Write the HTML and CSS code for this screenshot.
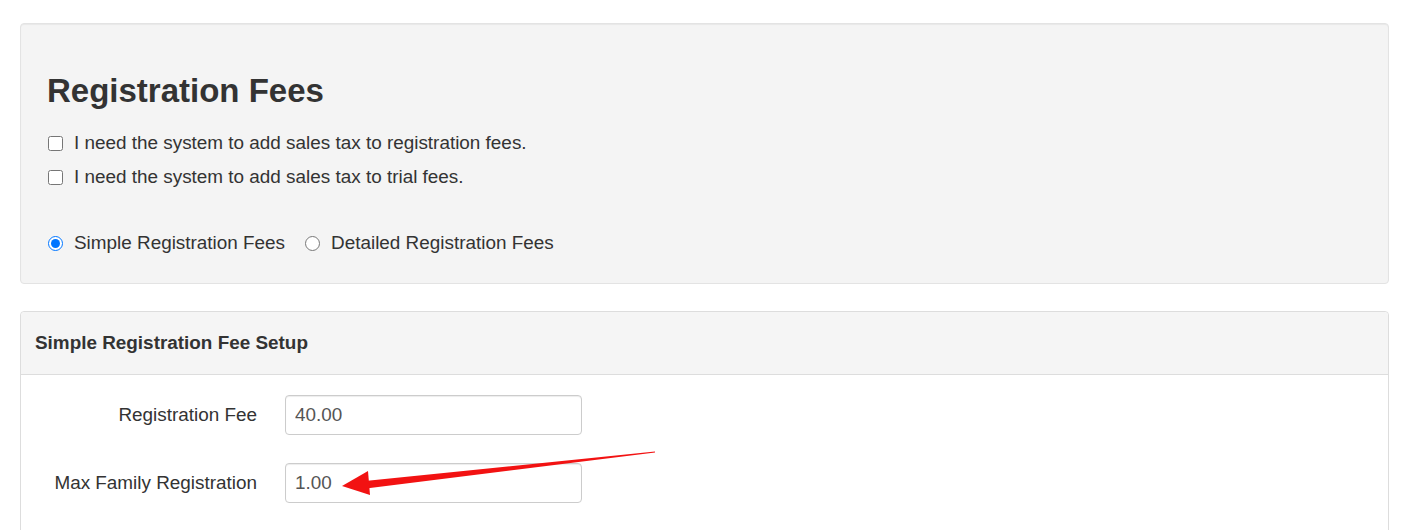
FILE: index.html
```html
<!DOCTYPE html>
<html>
<head>
<meta charset="utf-8">
<link rel="stylesheet" href="styles.css">
</head>
<body>
<div class="page">
  <section class="well">
    <h1 class="title">Registration Fees</h1>
    <label class="check"><input type="checkbox"> I need the system to add sales tax to registration fees.</label>
    <label class="check"><input type="checkbox"> I need the system to add sales tax to trial fees.</label>
    <div class="radios">
      <label class="radio"><input type="radio" name="mode" checked> Simple Registration Fees</label>
      <label class="radio"><input type="radio" name="mode"> Detailed Registration Fees</label>
    </div>
  </section>
  <section class="panel">
    <div class="panel-heading">Simple Registration Fee Setup</div>
    <div class="panel-body">
      <div class="row">
        <label class="row-label">Registration Fee</label>
        <input class="field" type="text" value="40.00">
      </div>
      <div class="row">
        <label class="row-label">Max Family Registration</label>
        <input class="field" type="text" value="1.00">
      </div>
      <div class="row">
        <label class="row-label"></label>
        <input class="field" type="text" value="">
      </div>
    </div>
  </section>
  <svg class="arrow" width="1402" height="530" viewBox="0 0 1402 530">
    <polygon points="655,451.5 655,452.5 366,488.5 365,481" fill="#f21212"/>
    <polygon points="342,486 368,471 370,495" fill="#f21212"/>
  </svg>
</div>
</body>
</html>
```

FILE: styles.css
```css
html, body {
  margin: 0;
  padding: 0;
  background: #ffffff;
}
body {
  font-family: "Liberation Sans", Arial, Helvetica, sans-serif;
  font-size: 18.9px;
  color: #333333;
}
.page {
  position: relative;
  padding: 23px 13px 0 20px;
  height: 507px;
  overflow: hidden;
}
.well {
  background: #f4f4f4;
  border: 1px solid #e3e3e3;
  border-radius: 4px;
  box-shadow: inset 0 1px 1px rgba(0, 0, 0, 0.05);
  padding: 21px 26px 23px 26px;
}
.title {
  font-size: 33px;
  font-weight: bold;
  line-height: 35px;
  margin: 28px 0 18px 0;
  color: #333333;
}
.check {
  display: flex;
  align-items: center;
  height: 34px;
  gap: 11px;
}
.check input,
.radio input {
  width: 15px;
  height: 15px;
  margin: 0 0 0 1px;
}
.radios {
  display: flex;
  align-items: center;
  height: 34px;
  margin-top: 32px;
  gap: 19px;
}
.radio {
  display: flex;
  align-items: center;
  gap: 11px;
}
.panel {
  margin-top: 27px;
  border: 1px solid #dddddd;
  border-radius: 4px;
  background: #ffffff;
  height: 300px;
}
.panel-heading {
  background: #f5f5f5;
  border-bottom: 1px solid #dddddd;
  border-radius: 4px 4px 0 0;
  height: 62px;
  display: flex;
  align-items: center;
  padding: 0 14px;
  font-weight: bold;
  font-size: 18.9px;
  color: #333333;
}
.panel-body {
  padding: 20px 0 0 0;
  display: flex;
  flex-direction: column;
  gap: 28px;
}
.row {
  display: grid;
  grid-template-columns: 236px 297px;
  column-gap: 28px;
  align-items: center;
}
.row-label {
  text-align: right;
  color: #333333;
}
.field {
  box-sizing: border-box;
  height: 40px;
  width: 297px;
  border: 1px solid #cccccc;
  border-radius: 4px;
  padding: 0 9px;
  font-family: "Liberation Sans", Arial, sans-serif;
  font-size: 18.9px;
  color: #555555;
  background: #ffffff;
  box-shadow: inset 0 1px 1px rgba(0, 0, 0, 0.075);
}
.arrow {
  position: absolute;
  left: 0;
  top: 0;
  pointer-events: none;
}
```
